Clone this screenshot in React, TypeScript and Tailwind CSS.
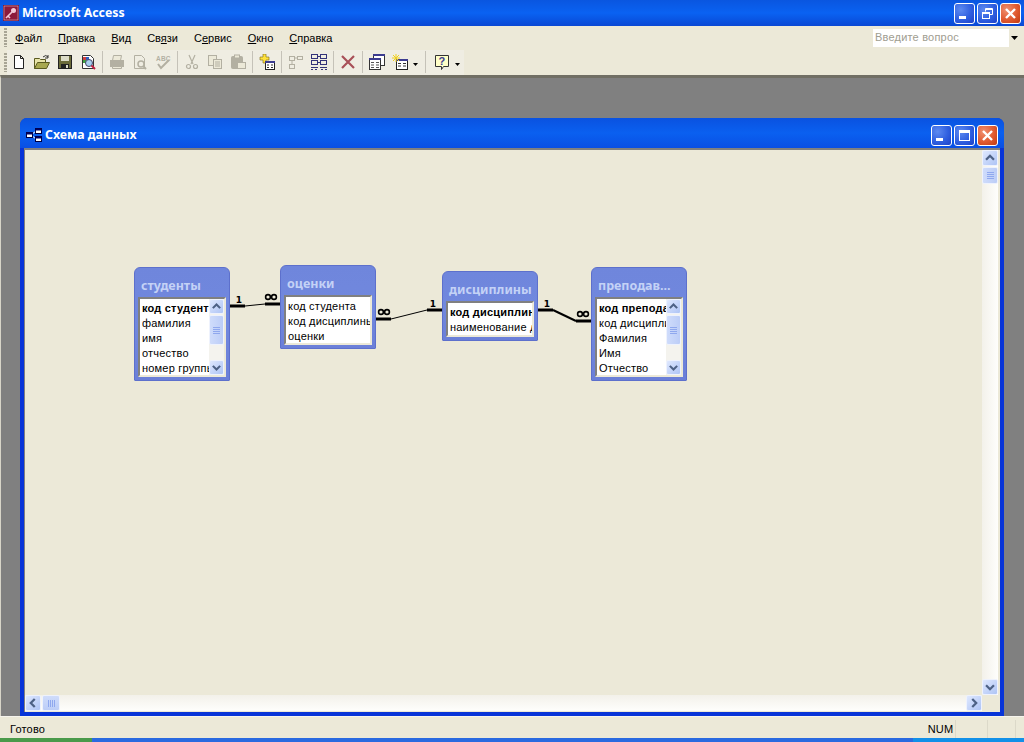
import type { ReactNode } from "react";

const uiFont = "font-['Liberation_Sans','Noto_Sans',sans-serif] tracking-[0.2px]";
const titleFont = "font-['Noto_Sans','Liberation_Sans',sans-serif] tracking-normal";

/* ---- window caption buttons ---- */
const CaptionButton = ({ kind }: { kind: "min" | "restore" | "max" | "close" }) => {
    const bg = kind === "close"
        ? "bg-[radial-gradient(circle_at_30%_30%,#f09070,#e05a30_55%,#c03a10)]"
        : "bg-[radial-gradient(circle_at_30%_30%,#5d8af0,#2f5fe0_55%,#1c40c8)]";
    return (
        <div className={`w-[21px] h-[21px] rounded-[3px] border border-white flex items-center justify-center ${bg}`}>
            <svg width="15" height="15" viewBox="0 0 15 15" fill="none">
                {kind === "min" && <rect x="2" y="10" width="7" height="3" fill="#fff" />}
                {kind === "max" && <rect x="2.5" y="2.5" width="10" height="10" stroke="#fff" strokeWidth="1" />}
                {kind === "max" && <rect x="2" y="2" width="11" height="3" fill="#fff" />}
                {kind === "restore" && (
                    <g stroke="#fff" strokeWidth="1">
                        <rect x="2.5" y="6.5" width="7" height="6" />
                        <path d="M2 7.5h8" />
                        <path d="M5.5 5.5v-3h7v6h-2.5 M5 3.5h8" />
                    </g>
                )}
                {kind === "close" && (
                    <path d="M3 3l9 9M12 3l-9 9" stroke="#fff" strokeWidth="2.4" />
                )}
            </svg>
        </div>
    );
};

/* ---- toolbar icons, all 16x16 ---- */
const dis = "#b3b0a2";
const ToolIcon = ({ name }: { name: string }) => {
    let body: ReactNode = null;
    switch (name) {
        case "new":
            body = <path d="M3.5 1.5h6l3 3v10h-9z M9.5 1.5v3h3" fill="#fff" stroke="#222" />;
            break;
        case "open":
            body = (
                <g>
                    <path d="M0.5 4.5h5l1 1h5v9h-11z" fill="#e8e4a8" stroke="#5a5a20" />
                    <path d="M3.5 8.5h12l-3 6h-12z" fill="#a8a850" stroke="#5a5a20" />
                    <path d="M9 3q3-3 5 0M14 1v3h-3" stroke="#333" fill="none" />
                </g>
            );
            break;
        case "save":
            body = (
                <g>
                    <rect x="1.5" y="1.5" width="13" height="13" fill="#6b6b3a" stroke="#222" />
                    <rect x="4" y="2" width="8" height="5" fill="#dcdcc8" />
                    <rect x="4" y="10" width="8" height="4" fill="#222" />
                    <rect x="9" y="11" width="2" height="3" fill="#dcdcc8" />
                </g>
            );
            break;
        case "search":
            body = (
                <g>
                    <path d="M2.5 1.5h8l3 3v10h-11z" fill="#fff" stroke="#333" />
                    <rect x="3" y="3" width="3" height="3" fill="#d04040" />
                    <rect x="6" y="3" width="3" height="3" fill="#3060c0" />
                    <rect x="3" y="6" width="3" height="3" fill="#40a040" />
                    <circle cx="9" cy="9" r="3.5" fill="#a8d0f0" stroke="#446" />
                    <path d="M11.5 11.5l3.5 3.5" stroke="#c02040" strokeWidth="2" />
                </g>
            );
            break;
        case "print":
            body = (
                <g fill="none" stroke={dis}>
                    <path d="M4.5 1.5h8l-1 5h-8z" fill="#ece9d8" />
                    <rect x="1.5" y="6.5" width="13" height="6" fill={dis} />
                    <path d="M3.5 12.5h9v2h-9z" fill="#ece9d8" />
                </g>
            );
            break;
        case "preview":
            body = (
                <g fill="none" stroke={dis}>
                    <path d="M2.5 1.5h7l3 3v10h-10z" />
                    <circle cx="9" cy="10" r="3" strokeWidth="1.5" />
                    <path d="M11 12l3 3" strokeWidth="2" />
                </g>
            );
            break;
        case "spell":
            body = (
                <g>
                    <text x="1" y="6.5" fontSize="6.5" fontWeight="700" fontFamily="Liberation Sans" fill={dis}>ABC</text>
                    <path d="M3 10l3 4 8-8" fill="none" stroke={dis} strokeWidth="2" />
                </g>
            );
            break;
        case "cut":
            body = (
                <g fill="none" stroke={dis} strokeWidth="1.2">
                    <path d="M5 1l4 9M11 1l-4 9" />
                    <circle cx="4.5" cy="12.5" r="2" />
                    <circle cx="11.5" cy="12.5" r="2" />
                </g>
            );
            break;
        case "copy":
            body = (
                <g fill="#ece9d8" stroke={dis}>
                    <rect x="1.5" y="1.5" width="8" height="10" />
                    <rect x="6.5" y="5.5" width="8" height="9" />
                    <path d="M8 8h5M8 10h5M8 12h5" />
                </g>
            );
            break;
        case "paste":
            body = (
                <g stroke={dis}>
                    <rect x="1.5" y="2.5" width="11" height="12" fill={dis} rx="1" />
                    <rect x="4.5" y="1" width="5" height="3" fill="#ece9d8" />
                    <rect x="7.5" y="8.5" width="8" height="6" fill="#ece9d8" />
                </g>
            );
            break;
        case "addTable":
            body = (
                <g>
                    <path d="M4 0h3v3h3v3H7v3H4V6H1V3h3z" fill="#ffe23c" stroke="#7a6a10" strokeWidth="0.6" />
                    <rect x="6.5" y="7.5" width="9" height="8" fill="#fff" stroke="#222" />
                    <rect x="6" y="7" width="10" height="2" fill="#3c3c90" />
                    <path d="M8 11h2M12 11h2M8 13.5h2M12 13.5h2" stroke="#333" />
                </g>
            );
            break;
        case "direct":
            body = (
                <g fill="none" stroke={dis}>
                    <rect x="1.5" y="2.5" width="5" height="4" />
                    <rect x="9.5" y="2.5" width="5" height="3" />
                    <rect x="1.5" y="10.5" width="5" height="4" />
                    <path d="M4 7v3M7 4h2" />
                </g>
            );
            break;
        case "all":
            body = (
                <g fill="none" stroke="#33337a">
                    <rect x="0.5" y="0.5" width="6" height="4" />
                    <rect x="9.5" y="0.5" width="6" height="4" />
                    <rect x="0.5" y="6.5" width="6" height="4" />
                    <rect x="9.5" y="6.5" width="6" height="4" />
                    <path d="M0 13.5h7M9 13.5h7M0 15.5h2M4 15.5h2M10 15.5h2M14 15.5h2M7 2.5h2M7 8.5h2" strokeWidth="1.2" />
                </g>
            );
            break;
        case "delete":
            body = <path d="M2 2l12 12M14 2L2 14" stroke="#a85058" strokeWidth="2.2" />;
            break;
        case "dbWindow":
            body = (
                <g>
                    <rect x="4.5" y="0.5" width="11" height="11" fill="#fff" stroke="#333" />
                    <rect x="4" y="0" width="12" height="2" fill="#3c3c90" />
                    <rect x="0.5" y="4.5" width="11" height="11" fill="#fff" stroke="#333" />
                    <rect x="0" y="4" width="12" height="2" fill="#3c3c90" />
                    <path d="M2 8.5h3M7 8.5h3M2 11h3M7 11h3M2 13.5h3M7 13.5h3" stroke="#555" />
                </g>
            );
            break;
        case "newObj":
            body = (
                <g>
                    <rect x="4.5" y="5.5" width="11" height="10" fill="#fff" stroke="#222" />
                    <rect x="4" y="5" width="12" height="2" fill="#3c3c90" />
                    <path d="M6 9.5h3M11 9.5h3M6 12h3M11 12h3" stroke="#333" />
                    <path d="M4 0v8M0 4h8M1 1l6 6M7 1l-6 6" stroke="#f0d020" />
                </g>
            );
            break;
        case "help":
            body = (
                <g>
                    <path d="M1.5 1.5h13v11h-5l-2 3v-3h-6z" fill="#ffffc8" stroke="#333" />
                    <text x="4.5" y="11" fontSize="11" fontWeight="700" fontFamily="Liberation Sans" fill="#3c3c90">?</text>
                </g>
            );
            break;
    }
    return <svg width="16" height="16" viewBox="0 0 16 16" className="shrink-0">{body}</svg>;
};

const ToolBtn = ({ name }: { name: string }) => (
    <div className="w-[23px] h-[22px] flex items-center justify-center"><ToolIcon name={name} /></div>
);

const Sep = () => (
    <div className="w-[6px] h-[22px] flex justify-center"><div className="w-px h-full bg-[#c5c2b8]" /></div>
);

const DropArrow = () => (
    <svg width="9" height="22" viewBox="0 0 9 22"><path d="M2 12h5l-2.5 3z" fill="#000" /></svg>
);

const Gripper = () => (
    <div className="w-[3px] h-[19px] ml-1 bg-[repeating-linear-gradient(180deg,#a8a595_0,#a8a595_2px,transparent_2px,transparent_3px)]" />
);

const menus = [
    { before: "", key: "Ф", after: "айл" },
    { before: "", key: "П", after: "равка" },
    { before: "", key: "В", after: "ид" },
    { before: "Св", key: "я", after: "зи" },
    { before: "С", key: "е", after: "рвис" },
    { before: "", key: "О", after: "кно" },
    { before: "", key: "С", after: "правка" },
];

/* ---- scrollbar pieces ---- */
const ScrollBtn = ({ dir, size = 16 }: { dir: "up" | "down" | "left" | "right"; size?: number }) => {
    const d = {
        up: "M3.5 10l4.5-4.5 4.5 4.5",
        down: "M3.5 6l4.5 4.5 4.5-4.5",
        left: "M10 3.5l-4.5 4.5 4.5 4.5",
        right: "M6 3.5l4.5 4.5-4.5 4.5",
    }[dir];
    return (
        <div
            className="rounded-[2px] border border-[#eef2fd] bg-gradient-to-br from-[#dfe8fe] to-[#aec4f5] flex items-center justify-center shrink-0"
            style={{ width: size, height: size }}
        >
            <svg width={size - 2} height={size - 2} viewBox="0 0 16 16" fill="none">
                <path d={d} stroke="#4d6185" strokeWidth="2.6" />
            </svg>
        </div>
    );
};

const VThumb = ({ height }: { height: number }) => (
    <div
        className="rounded-[2px] border border-[#eef2fd] bg-gradient-to-r from-[#cfdcfb] to-[#bccdf7] flex flex-col items-center justify-center gap-px shrink-0 mt-px"
        style={{ height }}
    >
        {[0, 1, 2, 3].map(i => <div key={i} className="w-[7px] h-px bg-[#8fa8ee]" />)}
    </div>
);

/* ---- relationship tables ---- */
interface TableBoxProps {
    title: string;
    rows: string[];
    boldFirst?: boolean;
    scroll?: boolean;
    className: string;
    listHeight: string;
}

const TableBox = ({ title, rows, boldFirst, scroll, className, listHeight }: TableBoxProps) => (
    <div className={`absolute w-[96px] rounded-t-[6px] rounded-b-[1px] border border-[#5d70cc] bg-gradient-to-b from-[#6f86dc] via-[#7188de] to-[#6b7fd8] px-[3px] pb-[3px] ${className}`}>
        <div className={`h-[29px] pt-[9px] pl-[3px] text-[12.5px] leading-[18px] font-bold text-[#c4d2f6] whitespace-nowrap overflow-hidden ${titleFont}`}>
            {title}
        </div>
        <div className={`${listHeight} flex bg-white border-2 border-t-[#808080] border-l-[#808080] border-r-[#ece9d8] border-b-[#ece9d8] overflow-hidden`}>
            <div className="flex-1 min-w-0 pt-[2px] pl-[2px]">
                {rows.map((r, i) => (
                    <div key={r} className={`h-[15px] leading-[15px] text-[11px] text-black whitespace-nowrap overflow-hidden ${boldFirst && i === 0 ? "font-bold" : ""}`}>
                        {r}
                    </div>
                ))}
            </div>
            {scroll && (
                <div className="w-[15px] flex flex-col justify-between bg-[#f4f3ee]">
                    <div>
                        <ScrollBtn dir="up" size={15} />
                        <VThumb height={30} />
                    </div>
                    <ScrollBtn dir="down" size={15} />
                </div>
            )}
        </div>
    </div>
);

/* ---- join lines between the tables, in page coordinates ---- */
const Relations = () => {
    const thick = "M230 306h15M265 304h15M376 319h15M427 310h15M538 310h15M576 321h15";
    const labels: [string, number, number][] = [
        ["1", 239, 303], ["1", 433, 307], ["1", 547, 307],
    ];
    const inf: [number, number][] = [[271, 297], [384, 312], [583, 314]];
    return (
        <svg className="absolute inset-0" width="957" height="545" viewBox="25 150 957 545">
            <path d={thick} stroke="#000" strokeWidth="3" fill="none" />
            <path d="M245 306L265 304M391 319L427 310" stroke="#000" strokeWidth="1" fill="none" />
            <path d="M553 310L576 321" stroke="#000" strokeWidth="2" fill="none" />
            {labels.map(([t, x, y]) => (
                <text key={x} x={x} y={y} textAnchor="middle" fontSize="9" fontWeight="700" fontFamily="DejaVu Sans">{t}</text>
            ))}
            {inf.map(([x, y]) => (
                <g key={x} fill="none" stroke="#000" strokeWidth="1.6">
                    <circle cx={x - 3} cy={y} r="2.4" />
                    <circle cx={x + 3} cy={y} r="2.4" />
                </g>
            ))}
        </svg>
    );
};

const ChildWindow = () => (
    <div className="ml-[19px] mt-[40px] w-[984px] flex-1 min-h-0 flex flex-col rounded-t-[7px] bg-[#0734d8]">
        <div className="h-[30px] pt-1 flex items-center pl-[6px] pr-[6px] rounded-t-[7px] bg-gradient-to-b from-[#0a52e0] via-[#0a60f0] to-[#0a4fe4]">
            <svg width="16" height="16" viewBox="0 0 16 16" className="mr-[3px]">
                <path d="M5 8l5-4M5 8l5 4" stroke="#fff" />
                <rect x="0.5" y="5.5" width="6" height="5" fill="#fff" stroke="#000040" />
                <rect x="0.5" y="5.5" width="6" height="2" fill="#000060" />
                <rect x="9.5" y="1.5" width="6" height="5" fill="#fff" stroke="#000040" />
                <rect x="9.5" y="1.5" width="6" height="2" fill="#000060" />
                <rect x="9.5" y="9.5" width="6" height="5" fill="#fff" stroke="#000040" />
                <rect x="9.5" y="9.5" width="6" height="2" fill="#000060" />
            </svg>
            <span className={`text-white font-bold text-[12.3px] flex-1 ${titleFont}`}>Схема данных</span>
            <div className="flex gap-[2px]">
                <CaptionButton kind="min" />
                <CaptionButton kind="max" />
                <CaptionButton kind="close" />
            </div>
        </div>
        <div className="flex-1 min-h-0 mx-[4px] mb-[4px] border-t-2 border-l border-t-[#808080] border-l-[#808080] bg-[#ece9d8] flex flex-col pr-[2px] pb-px">
            <div className="flex-1 min-h-0 flex">
                <div className="relative flex-1">
                    <Relations />
                    <TableBox title="студенты" boldFirst scroll className="left-[109px] top-[117px]"
                        listHeight="h-[80px]" rows={["код студента", "фамилия", "имя", "отчество", "номер группы"]} />
                    <TableBox title="оценки" className="left-[255px] top-[115px]"
                        listHeight="h-[50px]" rows={["код студента", "код дисциплины", "оценки"]} />
                    <TableBox title="дисциплины" boldFirst className="left-[417px] top-[121px]"
                        listHeight="h-[36px]" rows={["код дисциплины", "наименование дисциплины"]} />
                    <TableBox title="преподав..." boldFirst scroll className="left-[566px] top-[117px]"
                        listHeight="h-[80px]" rows={["код преподавателя", "код дисциплины", "Фамилия", "Имя", "Отчество"]} />
                </div>
                <div className="w-[16px] flex flex-col bg-gradient-to-r from-[#f3f1ea] to-[#fefefc]">
                    <ScrollBtn dir="up" size={16} />
                    <VThumb height={17} />
                    <div className="flex-1" />
                    <ScrollBtn dir="down" size={16} />
                </div>
            </div>
            <div className="h-[16px] flex bg-gradient-to-b from-[#f3f1ea] to-[#fefefc]">
                <ScrollBtn dir="left" size={16} />
                <div className="ml-px w-[18px] rounded-[2px] border border-[#eef2fd] bg-gradient-to-b from-[#cfdcfb] to-[#bccdf7] flex items-center justify-center gap-px">
                    {[0, 1, 2, 3].map(i => <div key={i} className="h-[7px] w-px bg-[#8fa8ee]" />)}
                </div>
                <div className="flex-1" />
                <ScrollBtn dir="right" size={16} />
                <div className="w-[16px] bg-[#ece9d8]" />
            </div>
        </div>
    </div>
);

const App = () => {
    return (
        <div className={`w-[1024px] h-[742px] flex flex-col overflow-hidden bg-[#ece9d8] text-[11px] text-black ${uiFont}`}>
            {/* main title bar */}
            <div className="h-[26px] shrink-0 flex items-center pl-[3px] pr-[3px] bg-gradient-to-b from-[#0a56e0] via-[#0a62f2] to-[#0a48d4]">
                <svg width="16" height="16" viewBox="0 0 16 16" className="mr-[3px]">
                    <rect width="16" height="16" fill="#7a1030" />
                    <rect x="1" y="1" width="14" height="14" fill="#8c1a3c" stroke="#e8d8d8" strokeWidth="0.5" />
                    <circle cx="10.5" cy="5.5" r="2.5" fill="#f0c8d8" />
                    <path d="M9 7l-6 6M5 11l2 2" stroke="#f0c8d8" strokeWidth="1.6" />
                </svg>
                <span className={`flex-1 text-white font-bold text-[12.3px] ${titleFont}`}>Microsoft Access</span>
                <div className="flex gap-[2px]">
                    <CaptionButton kind="min" />
                    <CaptionButton kind="restore" />
                    <CaptionButton kind="close" />
                </div>
            </div>

            {/* menu bar */}
            <div className="h-[22px] pt-px shrink-0 flex items-center">
                <Gripper />
                <div className="flex ml-[1px] tracking-normal">
                    {menus.map((m, i) => (
                        <span key={i} className="px-2 first:pl-[7px] leading-[22px]">
                            {m.before}<span className="underline">{m.key}</span>{m.after}
                        </span>
                    ))}
                </div>
                <div className="ml-auto mr-1 w-[147px] h-[18px] bg-white flex items-center justify-between pl-[2px]">
                    <span className="text-[#a09d90]">Введите вопрос</span>
                    <div className="w-[11px] h-full bg-[#ece9d8] flex items-center justify-center">
                        <svg width="7" height="4" viewBox="0 0 7 4"><path d="M0 0h7L3.5 4z" fill="#000" /></svg>
                    </div>
                </div>
            </div>

            {/* toolbar */}
            <div className="h-[27px] pt-px shrink-0 flex items-center">
                <Gripper />
                <div className="flex items-center w-[457px] h-[25px] bg-[#efede2]">
                    <ToolBtn name="new" />
                    <ToolBtn name="open" />
                    <ToolBtn name="save" />
                    <ToolBtn name="search" />
                    <Sep />
                    <ToolBtn name="print" />
                    <ToolBtn name="preview" />
                    <ToolBtn name="spell" />
                    <Sep />
                    <ToolBtn name="cut" />
                    <ToolBtn name="copy" />
                    <ToolBtn name="paste" />
                    <Sep />
                    <ToolBtn name="addTable" />
                    <Sep />
                    <ToolBtn name="direct" />
                    <ToolBtn name="all" />
                    <Sep />
                    <ToolBtn name="delete" />
                    <Sep />
                    <ToolBtn name="dbWindow" />
                    <ToolBtn name="newObj" />
                    <DropArrow />
                    <div className="w-[2px]" />
                    <Sep />
                    <div className="w-[2px]" />
                    <ToolBtn name="help" />
                    <DropArrow />
                </div>
            </div>

            {/* workspace */}
            <div className="flex-1 min-h-0 flex flex-col bg-[#808080] border-t-[3px] border-t-[#716f64] border-l border-l-[#d8d5c8]">
                <ChildWindow />
            </div>

            {/* status bar */}
            <div className="h-[22px] pt-[3px] shrink-0 flex items-center border-t border-[#f6f4ec]">
                <span className="pl-[10px] flex-1">Готово</span>
                <div className="w-[29px] h-[19px] leading-[19px] text-center">NUM</div>
                <div className="w-[32px] h-[19px] border-l border-[#dcd9c9]" />
                <div className="w-[28px] h-[19px] border-l border-[#dcd9c9]" />
                <div className="w-[9px] h-[19px] border-l border-[#dcd9c9]" />
            </div>

            {/* start bar peeking out below the window */}
            <div className="h-[4px] shrink-0 flex">
                <div className="w-[92px] bg-[#4a9a4a]" />
                <div className="w-[821px] bg-[#2a6ae0]" />
                <div className="flex-1 bg-[#1290e8]" />
            </div>
        </div>
    );
}

export default App;
